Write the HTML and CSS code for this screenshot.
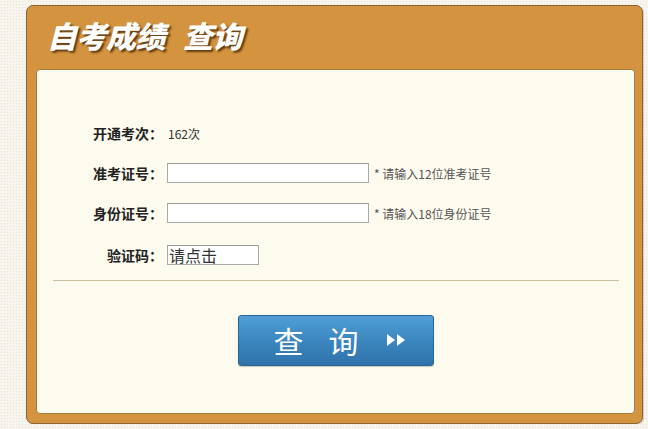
FILE: index.html
```html
<!DOCTYPE html>
<html lang="zh-CN">
<head>
  <meta charset="UTF-8" />
  <meta name="viewport" content="width=device-width, initial-scale=1.0"/>
  <title>自考成绩查询</title>
  <link rel="stylesheet" href="styles.css">
</head>
<body>
  <div class="box">
    <h1 class="title">自考成绩<span class="sep"></span>查询</h1>

    <form class="panel" id="queryForm">
      <div class="row">
        <label>开通考次：</label>
        <span class="value">162次</span>
      </div>
      <div class="row">
        <label>准考证号：</label>
        <input type="text" name="zkzh" maxlength="12" />
        <span class="hint">* 请输入12位准考证号</span>
      </div>
      <div class="row">
        <label>身份证号：</label>
        <input type="text" name="sfzh" maxlength="18" />
        <span class="hint">* 请输入18位身份证号</span>
      </div>
      <div class="row row-code">
        <label>验证码：</label>
        <input type="text" name="yzm" class="code" value="请点击" readonly />
      </div>

      <hr class="divider" />

      <div class="actions">
        <button type="submit" class="btn-query">查<span class="gap"></span>询
          <svg class="arrows" width="20" height="14" viewBox="0 0 20 14">
            <path d="M1 1 L9 7 L1 13 Z" fill="#fff"/>
            <path d="M11 1 L19 7 L11 13 Z" fill="#fff"/>
          </svg>
        </button>
      </div>
    </form>
  </div>

  <script>
    document.getElementById('queryForm').addEventListener('submit', function(e) {
      e.preventDefault();
    });
  </script>
</body>
</html>
```

FILE: styles.css
```css
body {
  margin: 0;
  padding: 5px 0 0 26px;
  font-family: "Noto Sans CJK SC", "Liberation Sans", sans-serif;
  background-color: #f7f5ee;
  background-image: radial-gradient(#e6e2d6 0.6px, transparent 0.8px);
  background-size: 3px 3px;
  overflow: hidden;
}
.box {
  width: 615px;
  height: 417px;
  background: #d4943f;
  border: 1px solid #8c6532;
  border-radius: 7px;
  box-shadow: 1px 1px 1px rgba(0,0,0,0.15);
  display: flex;
  flex-direction: column;
}
.title {
  margin: 0;
  height: 63px;
  padding-left: 20px;
  box-sizing: border-box;
  padding-top: 9px;
  font-size: 30px;
  line-height: 40px;
  font-weight: 900;
  font-style: italic;
  color: #fff;
  letter-spacing: -0.5px;
  text-shadow: 2px 2px 2px rgba(60,30,0,0.75);
}
.sep {
  display: inline-block;
  width: 18px;
}
.panel {
  flex: 1;
  margin: 0 7px 9px 9px;
  background: #fdfaee;
  border: 1px solid #a97c3e;
  border-radius: 4px;
  padding-top: 53px;
  box-sizing: border-box;
}
.row {
  display: flex;
  align-items: center;
  height: 20px;
  margin-bottom: 20px;
  font-size: 12px;
  color: #333;
}
.row label {
  width: 126px;
  text-align: right;
  font-weight: bold;
  font-size: 14px;
  color: #222;
  margin-right: 4px;
}
.value {
  font-size: 12px;
  margin-left: 1px;
}
.row input {
  width: 202px;
  height: 20px;
  padding: 0 3px;
  border: 1px solid #a9a9a9;
  border-top-color: #999;
  background: #fff;
  box-sizing: border-box;
  font-family: inherit;
}
.hint {
  margin-left: 5px;
  font-size: 12px;
  color: #555;
}
.row-code {
  margin-top: 22px;
}
.row input.code {
  width: 92px;
  font-size: 16px;
  color: #333;
  padding: 0 1px;
  line-height: 18px;
}
.divider {
  margin: -5px 15px 0 16px;
  border: none;
  border-top: 1px solid #c9bf9c;
}
.actions {
  display: flex;
  justify-content: center;
  padding-top: 34px;
}
.btn-query {
  width: 196px;
  height: 51px;
  border: 1px solid #2a6596;
  border-radius: 3px;
  background: linear-gradient(#4f9fd6, #3a84bd 55%, #2f73aa);
  color: #fff;
  font-family: inherit;
  font-size: 30px;
  line-height: 1;
  cursor: pointer;
  display: flex;
  align-items: center;
  justify-content: center;
  padding: 0 0 2px 8px;
  box-shadow: 0 1px 1px rgba(0,0,0,0.2);
}
.gap {
  display: inline-block;
  width: 25px;
}
.arrows {
  margin-left: 27px;
}
```
